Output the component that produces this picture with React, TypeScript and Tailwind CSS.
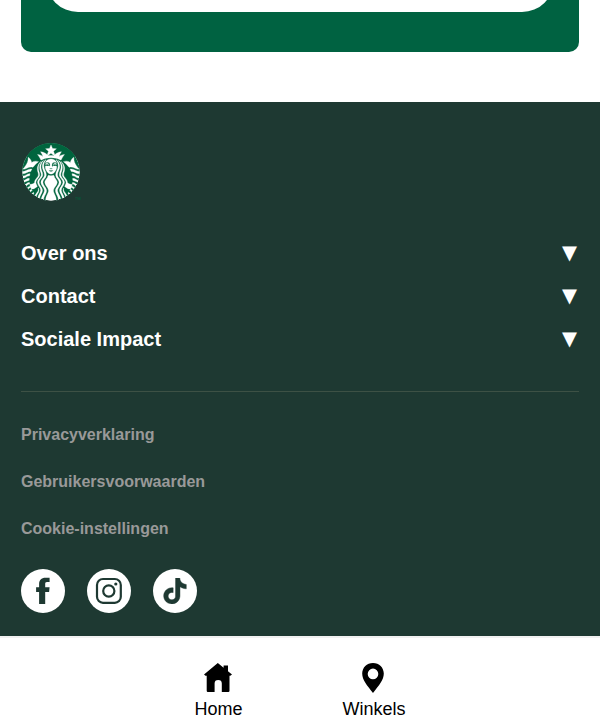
import { SiStarbucks, SiTiktok } from "react-icons/si";

const sections = ["Over ons", "Contact", "Sociale Impact"];
const links = ["Privacyverklaring", "Gebruikersvoorwaarden", "Cookie-instellingen"];

function Logo() {
  return (
    <div className="flex items-end">
      <div className="relative h-[58px] w-[58px] overflow-hidden rounded-full bg-[radial-gradient(circle,white_0_28.4px,transparent_28.8px)]">
        <SiStarbucks className="h-[58px] w-[58px] text-[#00653e] [&_path]:stroke-white [&_path]:[stroke-width:0.14]" />
        <svg viewBox="0 0 58 58" className="absolute inset-0 h-[58px] w-[58px]" fill="none">
          <path d="M5.2 13.4A28.4 28.4 0 0 1 52.8 13.4" stroke="#00653e" strokeWidth="2.2" />
        </svg>
      </div>
      <span className="-ml-[5px] text-[4px] leading-[5px] text-[#00653e]">TM</span>
    </div>
  );
}

function Facebook() {
  return (
    <svg viewBox="0 0 44 44" className="h-11 w-11">
      <circle cx="22" cy="22" r="22" fill="#fff" />
      <path
        d="M18.1 35V22.9H15.1V18.2H18.1V15.2C18.1 11.2 20.2 8.7 24.6 8.7H28.6V13H26C24.5 13 24.2 13.9 24.2 15V18.2H28.6L28.1 22.9H24.2V35Z"
        fill="#1e3932"
      />
    </svg>
  );
}

function Instagram() {
  return (
    <svg viewBox="0 0 44 44" className="h-11 w-11" fill="none" stroke="#1e3932">
      <circle cx="22" cy="22" r="22" fill="#fff" stroke="none" />
      <rect x="10" y="10" width="23.8" height="23.8" rx="6" strokeWidth="2.2" />
      <circle cx="21.8" cy="22" r="5.6" strokeWidth="2.2" />
      <circle cx="28.8" cy="15" r="1.6" fill="#1e3932" stroke="none" />
    </svg>
  );
}

export default function App() {
  return (
    <div className="flex h-[725px] flex-col overflow-hidden bg-white font-['Liberation_Sans',Arial,sans-serif]">
      <div className="h-[102px] shrink-0 px-[21px]">
        <div className="h-[52px] rounded-b-[10px] bg-[#006241] px-[25px]">
          <div className="h-3 overflow-hidden">
            <div className="-mt-[88px] h-[100px] rounded-[32px] bg-white" />
          </div>
        </div>
      </div>

      <footer className="h-[534px] shrink-0 bg-[#1e3932] px-[21px] pt-[41px]">
        <div className="ml-px">
          <Logo />
        </div>
        <div className="mt-[30px] border-b border-[#3d5145] pb-[31px]">
          {sections.map((name) => (
            <div key={name} className="flex h-[43px] items-center justify-between text-[20px] font-bold text-white">
              <span>{name}</span>
              <span className="mr-0.5 font-['DejaVu_Sans',sans-serif] text-[19.5px] font-normal">▼</span>
            </div>
          ))}
        </div>
        <div className="mt-[19px]">
          {links.map((name) => (
            <div key={name} className="flex h-[47px] items-center text-base font-bold text-[#999]">
              {name}
            </div>
          ))}
        </div>
        <div className="mt-[17px] flex gap-[22px]">
          <Facebook />
          <Instagram />
          <div className="flex h-11 w-11 items-center justify-center rounded-full bg-white text-[#1e3932]">
            <SiTiktok className="h-[26px] w-[26px] [&_path]:stroke-[#1e3932] [&_path]:[stroke-width:0.4]" />
          </div>
        </div>
      </footer>

      <nav className="flex grow justify-center gap-[100px] border-t-2 border-[#f1f1f1] pt-[25px] text-[18px] leading-[26px] text-black">
        <div className="flex flex-col items-center">
          <svg viewBox="0 0 28 30" className="h-[30px] w-7">
            <path
              d="M13.8 0 19.6 4.7V2.6H24V8.2L28 11.6 26.3 12.8H25.5V27.8Q25.5 29 24.3 29H17.8V20.5Q17.8 17.1 14.2 17.1T10.6 20.5V29H3.9Q2.7 29 2.7 27.8V12.8H1.5L0 11.4Z"
            />
          </svg>
          <span className="mt-[3px]">Home</span>
        </div>
        <div className="flex flex-col items-center">
          <svg viewBox="0 0 22 30" className="mr-0.5 h-[30px] w-[22px]">
            <path
              fillRule="evenodd"
              d="M11 0C4.8 0 .2 4.6.2 10.6.2 17 5 22.5 11 30 17 22.5 21.8 17 21.8 10.6 21.8 4.6 17.2 0 11 0ZM11 5.6A5.3 5.3 0 1 1 11 16.2 5.3 5.3 0 0 1 11 5.6Z"
            />
          </svg>
          <span className="mt-[3px]">Winkels</span>
        </div>
      </nav>
    </div>
  );
}
